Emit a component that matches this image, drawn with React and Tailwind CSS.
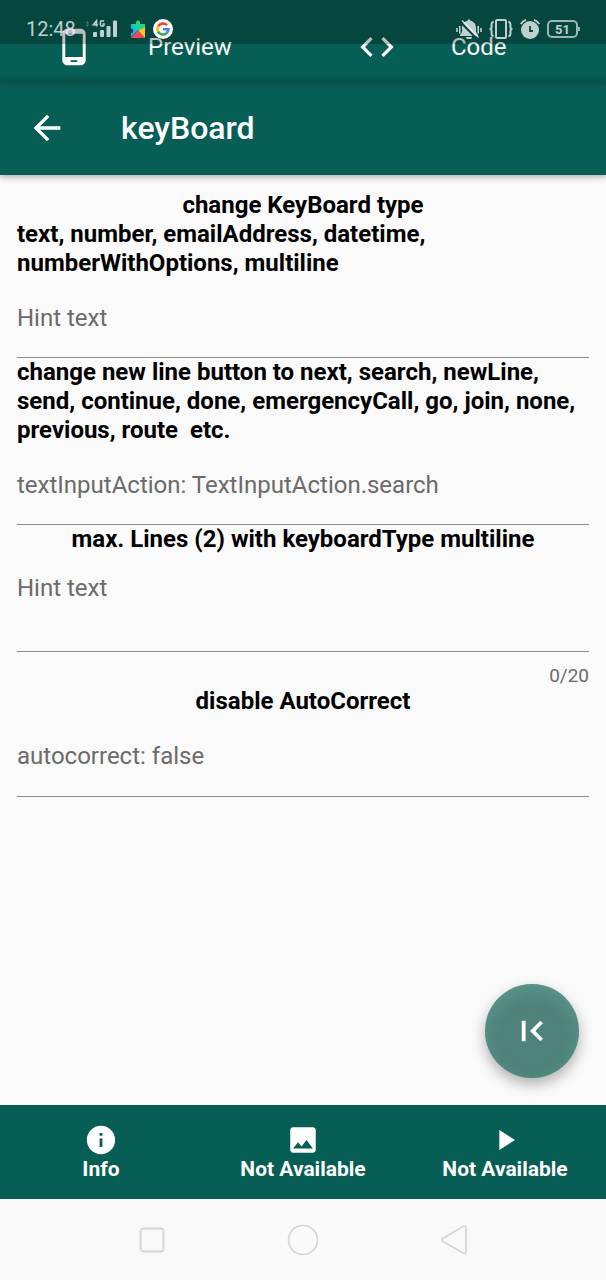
import React from "react";
import {
  MdArrowBack,
  MdCode,
  MdImage,
  MdInfo,
  MdPhoneAndroid,
  MdPlayArrow,
} from "react-icons/md";

function SignalIcon() {
  return (
    <svg width="34" height="20" viewBox="0 0 34 20" fill="currentColor" aria-hidden="true">
      <path d="M1 4.500l1.500-2.500L4 4.500zM1 5.500l1.500 2.500L4 5.500z" opacity=".4" />
      <path
        d="M11.500 7.500V1.800L8.300 5.800h4.500M19 2.600c-1-1.200-3.600-1.200-3.600 1v1.800c0 2.200 3.600 2.200 3.600.4V5h-1.600"
        fill="none"
        stroke="currentColor"
        strokeWidth="1.600"
      />
      <rect x="8" y="13" width="4" height="5" rx="1" />
      <rect x="15" y="11" width="4" height="7" rx="1" />
      <rect x="21.500" y="7" width="4" height="11" rx="1" />
      <rect x="28" y="1.500" width="4" height="16.500" rx="1" />
    </svg>
  );
}

function PuzzleIcon() {
  return (
    <svg width="14" height="18" viewBox="0 0 14 18" aria-hidden="true">
      <path d="M0 4h5V2.500a2 2 0 0 1 4 0V4h5v4l-7 3z" fill="#1fd58a" />
      <path d="M0 4l7 6-7 7v-4a2 2 0 0 0 0-4z" fill="#19b8f2" />
      <path d="M14 7v11l-7-7z" fill="#fbc52d" />
      <path d="M0 18l7-8 7 8z" fill="#ef4b52" />
      <circle cx="0" cy="11" r="2.200" fill="#07463f" />
    </svg>
  );
}

function GoogleIcon() {
  return (
    <svg width="20" height="20" viewBox="0 0 20 20" aria-hidden="true">
      <circle cx="10" cy="10" r="10" fill="#fff" />
      <g fill="none" strokeWidth="2.600">
        <path d="M14 6.200A5.500 5.500 0 0 0 5.200 7.300" stroke="#ea4335" />
        <path d="M5.200 7.300a5.500 5.500 0 0 0 0 5.400" stroke="#fbbc05" />
        <path d="M5.200 12.700a5.500 5.500 0 0 0 8.300 1.600" stroke="#34a853" />
        <path d="M13.500 14.300A5.500 5.500 0 0 0 15.500 10.200H10" stroke="#4285f4" />
      </g>
    </svg>
  );
}

function MutedBellIcon() {
  return (
    <svg width="26" height="20" viewBox="0 0 26 20" fill="currentColor" aria-hidden="true">
      <path d="M11.500 1.800a1.500 1.500 0 0 1 3 0C18 2.500 20 5.500 20 9v4l2 3v1H4v-1l2-3V9c0-3.500 2-6.500 5.500-7.200zM10 18h6a3 2.500 0 0 1-6 0z" />
      <path d="M5 3.500L20.500 19.500" stroke="#07463f" strokeWidth="2" />
      <path d="M6 1.500L22.500 18.500" stroke="currentColor" strokeWidth="1.400" />
      <path d="M1 9v4M3.800 7v7.500M22.200 7v7.500M25 9v4" stroke="currentColor" strokeWidth="1.600" />
    </svg>
  );
}

function VibrateIcon() {
  return (
    <svg width="24" height="20" viewBox="0 0 24 20" fill="none" stroke="currentColor" strokeWidth="2" aria-hidden="true">
      <rect x="7" y="1" width="10" height="18" rx="1" />
      <path d="M4.500 2.500C2.500 3.500 2.200 5 2.600 7S2.500 9 1.500 10c1 1 1.500 1.500 1.100 3.500S3 17 4.500 17.500M19.500 2.500c2 1 2.300 2.500 1.900 4.500S21.500 9 22.500 10c-1 1-1.500 1.500-1.100 3.500S21 17 19.500 17.500" />
    </svg>
  );
}

function AlarmIcon() {
  return (
    <svg width="20" height="20" viewBox="0 0 20 20" aria-hidden="true">
      <circle cx="10" cy="11" r="9" fill="currentColor" />
      <path d="M.8 5.200Q2.500 2 6 .9M19.200 5.200Q17.500 2 14 .9" stroke="currentColor" strokeWidth="1.800" fill="none" />
      <path d="M10 7v5h3" stroke="#07463f" strokeWidth="1.800" fill="none" />
    </svg>
  );
}

function FirstPageIcon() {
  return (
    <svg width="40" height="40" viewBox="0 0 24 24" fill="currentColor" stroke="currentColor" strokeWidth="0.300" aria-hidden="true">
      <path d="M18.410 16.590L13.820 12l4.590-4.590L17 6l-6 6 6 6zM6 6h2v12H6z" />
    </svg>
  );
}

function StatusBar() {
  return (
    <div className="absolute inset-x-0 top-0 z-20 flex h-[44px] items-end justify-between bg-black/25 px-[26px] pb-1 text-white/75">
      <div className="flex h-[22px] items-center">
        <span className="w-[59px] text-[20px] leading-[22px]">12:48</span>
        <SignalIcon />
        <span className="ml-3"><PuzzleIcon /></span>
        <span className="ml-2"><GoogleIcon /></span>
      </div>
      <div className="flex h-[22px] items-center gap-[7px]">
        <MutedBellIcon />
        <VibrateIcon />
        <AlarmIcon />
        <div className="flex items-center">
          <span className="flex h-[18px] w-[31px] items-center justify-center rounded-[5px] border-2 border-white/60 text-[13px] leading-none font-bold">51</span>
          <span className="h-1 w-0.5 bg-white/60" />
        </div>
      </div>
    </div>
  );
}

const heading = "block text-[24px] leading-[29px] font-bold text-black";
const field =
  "block w-full resize-none border-b border-[#8c8c8c] bg-transparent text-[24px] leading-[29px] text-black outline-none placeholder:text-[#6b6b6b] placeholder:opacity-100";

const actions = [
  { label: "Info", Icon: MdInfo },
  { label: "Not Available", Icon: MdImage },
  { label: "Not Available", Icon: MdPlayArrow },
];

export default function App() {
  return (
    <div className="relative flex min-h-screen flex-col bg-[#fafafa] font-[Roboto,sans-serif]">
      <div className="grid h-[81px] grid-cols-2 bg-[#075e54] pt-3 text-[24px] text-white">
        <button className="flex items-center pl-[54px]">
          <MdPhoneAndroid size={40} />
          <span className="ml-[54px]">Preview</span>
        </button>
        <button className="flex items-center pl-[54px]">
          <MdCode size={40} />
          <span className="ml-[54px]">Code</span>
        </button>
      </div>

      <header className="z-10 h-[94px] bg-[#075e54] text-white shadow-[0_1px_7px_rgba(0,0,0,0.4)]">
        <div className="flex h-full items-center bg-linear-to-b from-black/15 to-transparent to-8% pl-[27px]">
          <button aria-label="Back">
            <MdArrowBack size={40} />
          </button>
          <h1 className="ml-[54px] text-[32px] font-medium">keyBoard</h1>
        </div>
      </header>

      <StatusBar />

      <main className="relative flex-1 px-[17px] pt-4">
        <label htmlFor="keyboard-type" className={heading}>
          <span className="block text-center">change KeyBoard type</span>
          text, number, emailAddress, datetime, numberWithOptions, multiline
        </label>
        <input id="keyboard-type" placeholder="Hint text" className={`${field} h-[80px]`} />

        <label htmlFor="input-action" className={`${heading} whitespace-pre-wrap`}>
          {"change new line button to next, search, newLine, send, continue, done, emergencyCall, go, join, none, previous, route  etc."}
        </label>
        <input
          id="input-action"
          placeholder="textInputAction: TextInputAction.search"
          className={`${field} h-[80px]`}
        />

        <label htmlFor="max-lines" className={`${heading} text-center`}>
          max. Lines (2) with keyboardType multiline
        </label>
        <textarea
          id="max-lines"
          rows={2}
          maxLength={20}
          placeholder="Hint text"
          className={`${field} h-[98px] pt-5`}
        />
        <div className="h-[35px] pt-3 text-right text-[19px] leading-[24px] text-[#6b6b6b]">0/20</div>

        <label htmlFor="autocorrect" className={`${heading} text-center`}>
          disable AutoCorrect
        </label>
        <input
          id="autocorrect"
          autoCorrect="off"
          placeholder="autocorrect: false"
          className={`${field} h-[81px]`}
        />

        <button
          aria-label="First page"
          className="absolute right-[27px] bottom-[27px] flex size-[94px] items-center justify-center rounded-full bg-[#4e827a] text-white shadow-[0_6px_14px_rgba(0,0,0,0.3),inset_0_6px_16px_rgba(100,165,154,0.6)]"
        >
          <FirstPageIcon />
        </button>
      </main>

      <footer className="grid h-[94px] grid-cols-3 bg-[#075e54] text-white">
        {actions.map(({ label, Icon }, i) => (
          <button key={i} className="flex flex-col items-center justify-center text-[21px] leading-[24px] font-bold">
            <Icon size={34} />
            {label}
          </button>
        ))}
      </footer>

      <nav className="grid h-[81px] grid-cols-3 items-center justify-items-center bg-[#f9f9f9] px-[76px] text-[#d4d4d4]">
        <button aria-label="Recent apps">
          <svg width="32" height="32" viewBox="0 0 32 32" fill="none" stroke="currentColor" strokeWidth="1.800">
            <rect x="4.500" y="4.500" width="23" height="23" rx="3" />
          </svg>
        </button>
        <button aria-label="Home">
          <svg width="32" height="32" viewBox="0 0 32 32" fill="none" stroke="currentColor" strokeWidth="1.600">
            <circle cx="16" cy="16" r="14.500" />
          </svg>
        </button>
        <button aria-label="Back to previous screen">
          <svg width="32" height="32" viewBox="0 0 32 32" fill="none" stroke="currentColor" strokeWidth="1.700">
            <path d="M4.500 14.500L25 2.500q3-1 3 2v23q0 3-3 1.500L4.500 17q-1.500-1.200 0-2.500z" />
          </svg>
        </button>
      </nav>
    </div>
  );
}
